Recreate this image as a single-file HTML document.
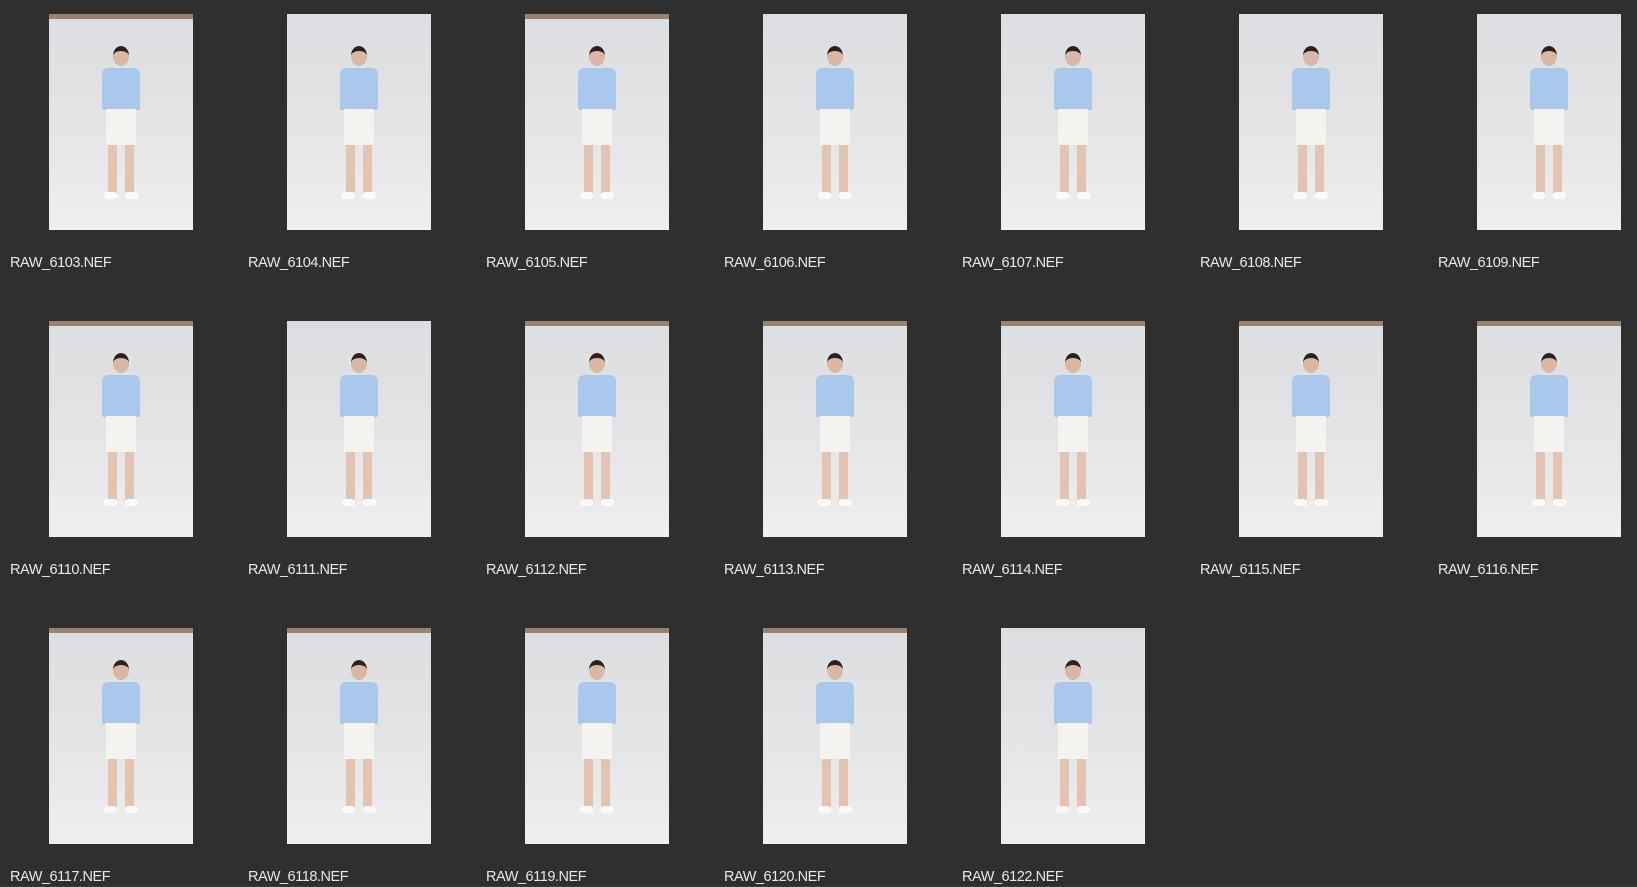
<!DOCTYPE html>
<html><head><meta charset="utf-8"><style>
html,body{margin:0;padding:0;background:#2f2f2f;width:1637px;height:887px;overflow:hidden}
body{position:relative;font-family:"Liberation Sans",sans-serif}
.c{position:absolute;width:238px;height:307px}
.t{position:absolute;left:49px;top:14px;width:144px;height:216px;background:linear-gradient(#dcdde0 0%,#e6e6e8 60%,#efefef 100%);overflow:hidden}
.t.b::before{content:"";position:absolute;left:0;top:0;width:100%;height:5px;background:#9a8270}
.l{position:absolute;left:10px;top:255px;font-size:14.5px;color:#e8e8e8;letter-spacing:-0.45px}
.h{position:absolute;left:64px;top:32px;width:16px;height:20px;border-radius:50%;background:#d9b7a3;border-top:5px solid #2a2220;box-sizing:border-box}
.s{position:absolute;left:53px;top:54px;width:38px;height:42px;background:#a9c8ec;border-radius:6px 6px 2px 2px}
.p{position:absolute;left:57px;top:95px;width:30px;height:36px;background:#f4f3ef}
.g1,.g2{position:absolute;top:131px;width:9px;height:48px;background:#e3c3b2}
.g1{left:59px}.g2{left:76px}
.f1,.f2{position:absolute;top:178px;width:13px;height:7px;background:#fafafa;border-radius:3px}
.f1{left:55px}.f2{left:76px}
#bot{position:absolute;left:0;top:886px;width:1637px;height:1px;background:#3a3a3a}
</style></head><body>
<div class="c" style="left:0;top:0"><div class="t b"><div class="h"></div><div class="s"></div><div class="p"></div><div class="g1"></div><div class="g2"></div><div class="f1"></div><div class="f2"></div></div><div class="l">RAW_6103.NEF</div></div>
<div class="c" style="left:238px;top:0"><div class="t"><div class="h"></div><div class="s"></div><div class="p"></div><div class="g1"></div><div class="g2"></div><div class="f1"></div><div class="f2"></div></div><div class="l">RAW_6104.NEF</div></div>
<div class="c" style="left:476px;top:0"><div class="t b"><div class="h"></div><div class="s"></div><div class="p"></div><div class="g1"></div><div class="g2"></div><div class="f1"></div><div class="f2"></div></div><div class="l">RAW_6105.NEF</div></div>
<div class="c" style="left:714px;top:0"><div class="t"><div class="h"></div><div class="s"></div><div class="p"></div><div class="g1"></div><div class="g2"></div><div class="f1"></div><div class="f2"></div></div><div class="l">RAW_6106.NEF</div></div>
<div class="c" style="left:952px;top:0"><div class="t"><div class="h"></div><div class="s"></div><div class="p"></div><div class="g1"></div><div class="g2"></div><div class="f1"></div><div class="f2"></div></div><div class="l">RAW_6107.NEF</div></div>
<div class="c" style="left:1190px;top:0"><div class="t"><div class="h"></div><div class="s"></div><div class="p"></div><div class="g1"></div><div class="g2"></div><div class="f1"></div><div class="f2"></div></div><div class="l">RAW_6108.NEF</div></div>
<div class="c" style="left:1428px;top:0"><div class="t"><div class="h"></div><div class="s"></div><div class="p"></div><div class="g1"></div><div class="g2"></div><div class="f1"></div><div class="f2"></div></div><div class="l">RAW_6109.NEF</div></div>

<div class="c" style="left:0;top:307px"><div class="t b"><div class="h"></div><div class="s"></div><div class="p"></div><div class="g1"></div><div class="g2"></div><div class="f1"></div><div class="f2"></div></div><div class="l">RAW_6110.NEF</div></div>
<div class="c" style="left:238px;top:307px"><div class="t"><div class="h"></div><div class="s"></div><div class="p"></div><div class="g1"></div><div class="g2"></div><div class="f1"></div><div class="f2"></div></div><div class="l">RAW_6111.NEF</div></div>
<div class="c" style="left:476px;top:307px"><div class="t b"><div class="h"></div><div class="s"></div><div class="p"></div><div class="g1"></div><div class="g2"></div><div class="f1"></div><div class="f2"></div></div><div class="l">RAW_6112.NEF</div></div>
<div class="c" style="left:714px;top:307px"><div class="t b"><div class="h"></div><div class="s"></div><div class="p"></div><div class="g1"></div><div class="g2"></div><div class="f1"></div><div class="f2"></div></div><div class="l">RAW_6113.NEF</div></div>
<div class="c" style="left:952px;top:307px"><div class="t b"><div class="h"></div><div class="s"></div><div class="p"></div><div class="g1"></div><div class="g2"></div><div class="f1"></div><div class="f2"></div></div><div class="l">RAW_6114.NEF</div></div>
<div class="c" style="left:1190px;top:307px"><div class="t b"><div class="h"></div><div class="s"></div><div class="p"></div><div class="g1"></div><div class="g2"></div><div class="f1"></div><div class="f2"></div></div><div class="l">RAW_6115.NEF</div></div>
<div class="c" style="left:1428px;top:307px"><div class="t b"><div class="h"></div><div class="s"></div><div class="p"></div><div class="g1"></div><div class="g2"></div><div class="f1"></div><div class="f2"></div></div><div class="l">RAW_6116.NEF</div></div>

<div class="c" style="left:0;top:614px"><div class="t b"><div class="h"></div><div class="s"></div><div class="p"></div><div class="g1"></div><div class="g2"></div><div class="f1"></div><div class="f2"></div></div><div class="l">RAW_6117.NEF</div></div>
<div class="c" style="left:238px;top:614px"><div class="t b"><div class="h"></div><div class="s"></div><div class="p"></div><div class="g1"></div><div class="g2"></div><div class="f1"></div><div class="f2"></div></div><div class="l">RAW_6118.NEF</div></div>
<div class="c" style="left:476px;top:614px"><div class="t b"><div class="h"></div><div class="s"></div><div class="p"></div><div class="g1"></div><div class="g2"></div><div class="f1"></div><div class="f2"></div></div><div class="l">RAW_6119.NEF</div></div>
<div class="c" style="left:714px;top:614px"><div class="t b"><div class="h"></div><div class="s"></div><div class="p"></div><div class="g1"></div><div class="g2"></div><div class="f1"></div><div class="f2"></div></div><div class="l">RAW_6120.NEF</div></div>
<div class="c" style="left:952px;top:614px"><div class="t"><div class="h"></div><div class="s"></div><div class="p"></div><div class="g1"></div><div class="g2"></div><div class="f1"></div><div class="f2"></div></div><div class="l">RAW_6122.NEF</div></div>
<div id="bot"></div>
</body></html>
